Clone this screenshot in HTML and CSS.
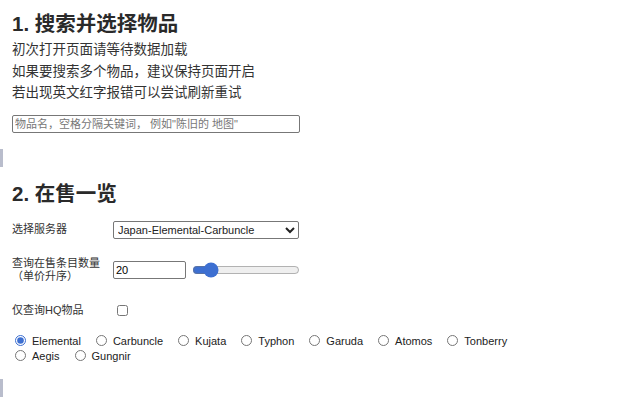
FILE: index.html
```html
<!DOCTYPE html>
<html>
<head>
    <title>物品查询</title>
    <meta charset="UTF-8">
    <link rel="stylesheet" href="styles.css">
</head>
<body>
    <section class="block">
        <h1>1. 搜索并选择物品</h1>
        <p class="tip">初次打开页面请等待数据加载<br>如果要搜索多个物品，建议保持页面开启<br>若出现英文红字报错可以尝试刷新重试</p>
        <input class="search" type="text" placeholder="物品名，空格分隔关键词， 例如&quot;陈旧的 地图&quot;">
    </section>
    <div class="mark"></div>

    <section class="block">
        <h2>2. 在售一览</h2>
        <div class="row">
            <label class="label">选择服务器</label>
            <select class="server">
                <option>Japan-Elemental-Carbuncle</option>
            </select>
        </div>
        <div class="row row-count">
            <label class="label">查询在售条目数量<br>（单价升序）</label>
            <div class="count">
                <input class="num" type="text" value="20">
                <input class="slider" type="range" min="0" max="100" value="12">
            </div>
        </div>
        <div class="row">
            <label class="label">仅查询HQ物品</label>
            <input class="hq" type="checkbox">
        </div>
        <div class="worlds">
            <label><input type="radio" name="world" checked>Elemental</label>
            <label><input type="radio" name="world">Carbuncle</label>
            <label><input type="radio" name="world">Kujata</label>
            <label><input type="radio" name="world">Typhon</label>
            <label><input type="radio" name="world">Garuda</label>
            <label><input type="radio" name="world">Atomos</label>
            <label><input type="radio" name="world">Tonberry</label>
            <label><input type="radio" name="world">Aegis</label>
            <label><input type="radio" name="world">Gungnir</label>
        </div>
    </section>
    <div class="mark"></div>
</body>
</html>
```

FILE: styles.css
```css
body {
    font-family: "Liberation Sans", "Noto Sans CJK SC", sans-serif;
    color: #222;
    margin: 0;
    padding: 0;
    background: #fff;
}
.block {
    padding: 0 12px;
}
h1, h2 {
    font-size: 20.5px;
    font-weight: bold;
    color: #2a2a2a;
    margin: 0;
    line-height: 30px;
}
h1 {
    padding-top: 9px;
}
h2 {
    padding-top: 12px;
    margin-bottom: 12px;
}
.tip {
    font-size: 13.5px;
    line-height: 21.5px;
    margin: 0 0 10px;
    color: #333;
}
.search {
    width: 288px;
    height: 18px;
    box-sizing: border-box;
    font-size: 11px;
    font-family: inherit;
    border: 1px solid #777;
    border-radius: 2px;
    padding: 0 2px;
    margin: 0;
}
.search::placeholder {
    color: #777;
}
.mark {
    width: 3px;
    height: 18px;
    background: #b9bdcc;
    margin-top: 16px;
}
.row {
    display: flex;
    align-items: center;
    margin-bottom: 18px;
    font-size: 11px;
}
.row-count {
    margin-bottom: 21px;
}
.label {
    width: 101px;
    line-height: 13px;
    color: #333;
}
.server {
    width: 186px;
    height: 18px;
    font-size: 11px;
    font-family: inherit;
    border: 1px solid #777;
    border-radius: 2px;
    background: #fff;
    color: #222;
    margin: 0;
}
.count {
    display: flex;
    align-items: center;
    gap: 6px;
}
.num {
    width: 73px;
    height: 18px;
    box-sizing: border-box;
    font-size: 11px;
    font-family: inherit;
    border: 1px solid #777;
    border-radius: 2px;
    padding: 0 2px;
    margin: 0;
}
.slider {
    width: 108px;
    margin: 0;
    accent-color: #3d6fd1;
}
.hq {
    margin: 0 0 0 4px;
    width: 11px;
    height: 11px;
}
.worlds {
    display: flex;
    flex-wrap: wrap;
    column-gap: 15px;
    row-gap: 1px;
    font-size: 11px;
    line-height: 14px;
    max-width: 540px;
    margin-top: -1px;
    padding-left: 3px;
}
.worlds label {
    display: inline-flex;
    align-items: center;
    gap: 6px;
    white-space: nowrap;
}
.worlds input {
    margin: 0;
    width: 11px;
    height: 11px;
    accent-color: #3d6fd1;
}
```
